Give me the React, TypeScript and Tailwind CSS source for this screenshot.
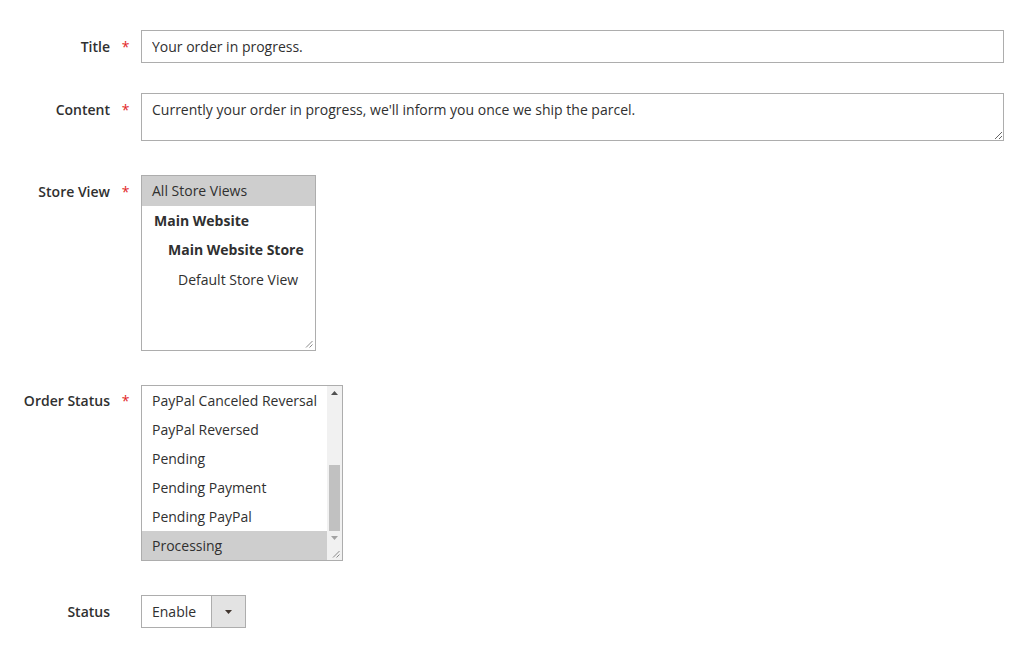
import React from 'react'

const font = { fontFamily: '"Open Sans", "Liberation Sans", sans-serif' }

const Grip: React.FC = () => (
  <svg width="8" height="8" viewBox="0 0 8 8" className="absolute bottom-[2px] right-[2px] z-20">
    <line x1="7.5" y1="1" x2="1" y2="7.5" stroke="#8a8a8a" strokeWidth="1" />
    <line x1="7.5" y1="4.5" x2="4.5" y2="7.5" stroke="#8a8a8a" strokeWidth="1" />
  </svg>
)

interface LabelProps {
  text: string
  required?: boolean
  top: string
}

const Label: React.FC<LabelProps> = ({ text, required, top }) => (
  <div className={`flex shrink-0 ${top}`}>
    <div className="w-[110px] text-right text-[14px] leading-[20px] font-semibold text-[#303030]">{text}</div>
    <div className="w-[31px] text-center text-[14px] leading-[20px] text-[#e22626]">{required ? '*' : ''}</div>
  </div>
)

const storeViews = [
  { text: 'All Store Views', cls: 'pl-[10px] bg-[#cecece]' },
  { text: 'Main Website', cls: 'pl-[12px] font-bold' },
  { text: 'Main Website Store', cls: 'pl-[26px] font-bold' },
  { text: 'Default Store View', cls: 'pl-[36px]' },
]

const orderStatuses = [
  'PayPal Canceled Reversal',
  'PayPal Reversed',
  'Pending',
  'Pending Payment',
  'Pending PayPal',
  'Processing',
]

export default function App() {
  return (
    <div style={font} className="w-[1032px] h-[656px] bg-white pt-[30px] text-[#303030] text-[14px]">
      {/* Title */}
      <div className="flex">
        <Label text="Title" required top="pt-[7px]" />
        <input
          readOnly
          defaultValue="Your order in progress."
          style={font}
          className="block h-[33px] w-[863px] border border-[#adadad] bg-white px-[10px] text-[14px] text-[#303030] outline-none"
        />
      </div>

      {/* Content */}
      <div className="flex mt-[30px]">
        <Label text="Content" required top="pt-[7px]" />
        <textarea
          readOnly
          defaultValue="Currently your order in progress, we'll inform you once we ship the parcel."
          style={font}
          className="block h-[48px] w-[863px] border border-[#adadad] bg-white px-[10px] pt-[6px] text-[14px] leading-[20px] text-[#303030] outline-none"
        />
      </div>

      {/* Store View */}
      <div className="flex mt-[34px]">
        <Label text="Store View" required top="pt-[7px]" />
        <div className="relative h-[176px] w-[175px] border border-[#adadad] bg-white">
          {storeViews.map((o) => (
            <div key={o.text} className={`h-[29.5px] leading-[29.5px] whitespace-nowrap ${o.cls}`}>
              {o.text}
            </div>
          ))}
          <Grip />
        </div>
      </div>

      {/* Order Status */}
      <div className="flex mt-[34px]">
        <Label text="Order Status" required top="pt-[6px]" />
        <div className="relative flex h-[176px] w-[202px] border border-[#adadad] bg-white">
          <div className="flex-1">
            {orderStatuses.map((s, i) => (
              <div
                key={s}
                className={`h-[29px] leading-[29px] pl-[10px] whitespace-nowrap ${i === 5 ? 'bg-[#cecece]' : ''}`}
              >
                {s}
              </div>
            ))}
          </div>
          <div className="relative z-10 flex w-[15px] flex-col bg-[#f1f1f1]">
            <div className="flex h-[15px] items-center justify-center">
              <svg width="7" height="4" viewBox="0 0 7 4">
                <path d="M3.5 0 L7 4 L0 4 Z" fill="#505050" />
              </svg>
            </div>
            <div className="flex-1 pt-[64px] px-[2px]">
              <div className="h-[66px] w-[11px] bg-[#c1c1c1]" />
            </div>
            <div className="flex h-[15px] items-center justify-center">
              <svg width="7" height="4" viewBox="0 0 7 4">
                <path d="M0 0 L7 0 L3.5 4 Z" fill="#a3a3a3" />
              </svg>
            </div>
            <div className="h-[15px] bg-[#f1f1f1]" />
          </div>
          <Grip />
        </div>
      </div>

      {/* Status */}
      <div className="flex mt-[34px]">
        <Label text="Status" top="pt-[7px]" />
        <div className="flex h-[33px] w-[105px] border border-[#adadad] bg-white">
          <div className="flex-1 pl-[10px] leading-[31px]">Enable</div>
          <div className="flex w-[34px] items-center justify-center border-l border-[#adadad] bg-[#e3e3e3]">
            <svg width="7" height="4" viewBox="0 0 7 4">
              <path d="M0 0 L7 0 L3.5 4 Z" fill="#41362f" />
            </svg>
          </div>
        </div>
      </div>
    </div>
  )
}
